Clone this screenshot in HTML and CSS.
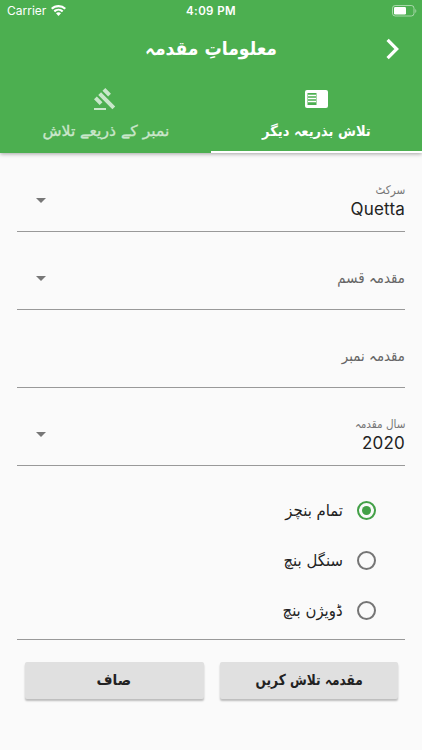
FILE: index.html
```html
<!DOCTYPE html>
<html lang="ur" dir="rtl">
<head>
<meta charset="utf-8">
<title>معلوماتِ مقدمہ</title>
<link rel="stylesheet" href="styles.css">
</head>
<body>
<header class="appbar">
  <div class="status" dir="ltr">
    <div class="carrier">Carrier
      <svg width="15" height="12" viewBox="0 0 15 12" fill="#fff"><path d="M7.5 0C4.6 0 2 1.100 0 2.900L1.500 4.500A8.900 8.900 0 0 1 13.500 4.500L15 2.900A11 11 0 0 0 7.500 0Z"/><path d="M7.500 3.800C5.600 3.800 3.900 4.500 2.600 5.700L4.100 7.200A5 5 0 0 1 10.900 7.200L12.400 5.700A7 7 0 0 0 7.500 3.800Z"/><path d="M7.500 7.300C6.500 7.300 5.700 7.700 5 8.300L7.500 11L10 8.300C9.300 7.700 8.500 7.300 7.500 7.300Z"/></svg>
    </div>
    <div class="clock">4:09 PM</div>
    <svg class="battery" width="25" height="12" viewBox="0 0 25 12"><rect x=".5" y=".5" width="21.500" height="10.500" rx="2.700" fill="none" stroke="#fff" stroke-opacity=".5"/><rect x="2" y="2" width="12" height="7.500" rx="1.200" fill="#fff"/><path d="M23.300 4v4q1-.5 1-2t-1-2" fill="#fff" fill-opacity=".5"/></svg>
  </div>
  <div class="toolbar">
    <svg class="back" width="14" height="22" viewBox="0 0 14 22" fill="none" stroke="#fff" stroke-width="3.200"><path d="M1.600 1.900L10.700 11L1.600 20.100"/></svg>
    <h1><span class="t title">معلوماتِ مقدمہ</span></h1>
  </div>
  <nav class="tabs">
    <div class="tab active">
      <svg width="24" height="24" viewBox="0 0 24 24"><rect x="0" y="3" width="23" height="18" rx="2" fill="#fff"/><path d="M2.500 6h9v12h-9z" fill="#4caf50"/><path d="M3 8.500h8M3 11.500h8M3 14.500h8" stroke="#fff" stroke-width="1.300"/></svg>
      <span class="t tab-a">تلاش بذریعہ دیگر</span>
    </div>
    <div class="tab">
      <svg width="24" height="24" viewBox="0 0 24 24" fill="#fff"><path d="M0 21h12v2H0zM4.245 8.070l2.830-2.827 14.140 14.142-2.828 2.828zM11.317 1l5.657 5.656-2.830 2.830-5.654-5.660zM2.825 9.485l5.657 5.657-2.828 2.828-5.657-5.657z"/></svg>
      <span class="t tab-b">نمبر کے ذریعے تلاش</span>
    </div>
  </nav>
</header>
<main>
  <div class="field">
    <div class="texts"><span class="label"><span class="t l1">سرکٹ</span></span><span class="value">Quetta</span></div>
    <i class="caret"></i>
  </div>
  <div class="field">
    <span class="hint"><span class="t h1">مقدمہ قسم</span></span>
    <i class="caret"></i>
  </div>
  <div class="field">
    <span class="hint"><span class="t h2">مقدمہ نمبر</span></span>
  </div>
  <div class="field">
    <div class="texts"><span class="label"><span class="t l2">سال مقدمہ</span></span><span class="value">2020</span></div>
    <i class="caret"></i>
  </div>
  <div class="radios">
    <div class="radio on"><i class="dot"></i><span class="t r1">تمام بنچز</span></div>
    <div class="radio"><i class="dot"></i><span class="t r2">سنگل بنچ</span></div>
    <div class="radio"><i class="dot"></i><span class="t r3">ڈویژن بنچ</span></div>
  </div>
  <div class="actions">
    <div class="button"><span class="t b1">مقدمہ تلاش کریں</span></div>
    <div class="button"><span class="t b2">صاف</span></div>
  </div>
</main>
</body>
</html>
```
FILE: styles.css
```css
* { box-sizing: border-box; }
body { margin: 0; height: 750px; overflow: hidden; background: #fafafa; color: #222; font-family: Inter, "DejaVu Sans", sans-serif; }
svg { display: block; flex: none; }
.t { display: inline-block; font-family: "DejaVu Sans", sans-serif; white-space: nowrap; line-height: 24px; transform-origin: 100% 50%; }
.appbar { position: relative; height: 153px; background: #4caf50; color: #fff; box-shadow: 0 1px 4px rgba(0,0,0,.35); }
.status { height: 22px; display: grid; grid-template-columns: 1fr auto 1fr; align-items: center; padding: 0 5px 0 7px; font-size: 12px; }
.carrier { display: flex; align-items: center; gap: 5px; line-height: 14px; margin-top: -1px; }
.clock { font-weight: 600; font-size: 11.500px; letter-spacing: .4px; padding-right: 2px; }
.battery { justify-self: end; margin-top: -1px; }
.toolbar { height: 54px; display: grid; grid-template-columns: 36px 1fr 36px; align-items: center; }
.back { margin-right: 22px; }
h1 { margin: -2px 0 0; text-align: center; font-size: 19px; line-height: 24px; }
.title { transform: scaleX(.905); transform-origin: 50% 50%; }
.tabs { display: flex; height: 77px; }
.tab { flex: 1; display: flex; flex-direction: column; align-items: center; padding-top: 11px; gap: 8px; opacity: .7; border-bottom: 2px solid transparent; }
.tab.active { opacity: 1; border-color: #fff; }
.tab .t { font-size: 14px; font-weight: 700; transform: scaleX(.93); transform-origin: 50% 50%; }
.tab .tab-b { font-size: 15px; font-weight: 400; -webkit-text-stroke: .3px #fff; transform: scaleX(1.04); }
main { padding: 1px 17px 0; }
.field { height: 78px; display: flex; justify-content: space-between; border-bottom: 1px solid #999; }
.texts { display: flex; flex-direction: column; padding-top: 25px; }
.label { height: 19px; font-size: 12px; color: #777; }
.label .t { line-height: 22px; transform: scaleX(.87); }
.value { font-size: 17px; line-height: 22px; letter-spacing: .2px; }
.hint { padding-top: 34px; line-height: 24px; font-size: 15px; color: #666; }
.hint .t { transform: scaleX(.89); }
.caret { width: 10px; height: 5px; margin: 44px 0 0 19px; background: #777; clip-path: polygon(0 0, 100% 0, 50% 100%); }
.radios { height: 174px; padding: 20px 29px 0 0; border-bottom: 1px solid #999; }
.radio { height: 50px; display: flex; align-items: center; gap: 14px; font-size: 16px; }
.radio .t { transform: scaleX(.93); }
.dot { width: 19px; height: 19px; margin-top: -1px; border: 2px solid #757575; border-radius: 50%; display: grid; place-items: center; }
.on .dot { border-color: #43a047; }
.on .dot::after { content: ""; width: 9px; height: 9px; border-radius: 50%; background: #43a047; }
.actions { display: flex; gap: 16px; padding: 22px 7px 0 8px; }
.button { flex: 1; height: 37px; background: #e0e0e0; border-radius: 2px; box-shadow: 0 2px 2px rgba(0,0,0,.25); text-align: center; padding-top: 6px; font-size: 15px; font-weight: 700; color: #222; }
.button .t { transform: scaleX(.81); transform-origin: 50% 50%; }
.button .b2 { transform: scaleX(.92); }
```
